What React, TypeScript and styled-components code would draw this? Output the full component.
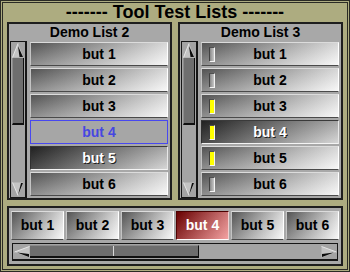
import React from "react";
import styled, { createGlobalStyle, css } from "styled-components";

const GlobalStyle = createGlobalStyle`
  body {
    margin: 0;
    font-family: "Liberation Sans", Arial, sans-serif;
  }
`;

const Frame = styled.div`
  box-sizing: border-box;
  width: 350px;
  height: 272px;
  background: #adac80;
  border: 3px double #2a2a24;
  padding: 0 4px 3px 4px;
  display: flex;
  flex-direction: column;
`;

const Title = styled.h1`
  margin: 0;
  height: 19px;
  line-height: 19px;
  font-size: 18px;
  font-weight: bold;
  text-align: center;
  color: #000;
  white-space: pre;
`;

const Lists = styled.div`
  display: grid;
  grid-template-columns: 1fr 1fr;
  gap: 6px;
  height: 178px;
`;

const Panel = styled.section`
  box-sizing: border-box;
  background: #a8a8a8;
  border: 2px solid #1e1e1e;
  display: flex;
  flex-direction: column;
`;

const PanelTitle = styled.div`
  height: 17px;
  line-height: 17px;
  font-size: 14px;
  font-weight: bold;
  text-align: center;
  color: #000;
`;

const ListBody = styled.div`
  display: flex;
  gap: 3px;
  padding: 0 2px 0 1px;
  height: 157px;
`;

const VScroll = styled.div`
  box-sizing: border-box;
  width: 17px;
  height: 157px;
  border: 1px solid #161616;
  border-right-width: 2px;
  background: #a4a4a4;
  display: flex;
  flex-direction: column;
  align-items: center;
`;

const ArrowBox = styled.div`
  width: 14px;
  height: 16px;
  display: flex;
  align-items: center;
  justify-content: center;
  flex: none;
`;

const VTrack = styled.div`
  flex: 1;
  width: 100%;
  padding: 0 1px;
  box-sizing: border-box;
`;

const VThumb = styled.div`
  box-sizing: border-box;
  height: 67px;
  background: #6e6e6e;
  border-left: 1px solid #8c8c8c;
  border-right: 1px solid #101010;
  border-bottom: 2px solid #101010;
`;

const Buttons = styled.div`
  flex: 1;
  display: flex;
  flex-direction: column;
  gap: 2px;
  margin-top: 1px;
`;

type Look = "normal" | "pressed" | "selected" | "red";

const looks = {
  normal: css`
    background: linear-gradient(to bottom, rgba(0, 0, 0, 0.12), rgba(255, 255, 255, 0.3)),
      linear-gradient(to right, #5e5e5e, #f4f4f4);
    border-color: #dcdcdc #ffffff #4a4a4a #c4c4c4;
    color: #000;
  `,
  pressed: css`
    background: linear-gradient(to bottom, rgba(0, 0, 0, 0.2), rgba(255, 255, 255, 0.15)),
      linear-gradient(to right, #2a2a2a, #cfcfcf);
    border-color: #3a3a3a #e8e8e8 #f4f4f4 #303030;
    color: #fff;
    text-shadow: 1px 1px 0 #202020;
  `,
  selected: css`
    background: #a6a6a6;
    border-color: #4848f0;
    color: #4646e0;
  `,
  red: css`
    background: linear-gradient(to bottom, rgba(0, 0, 0, 0.15), rgba(255, 255, 255, 0.2)),
      linear-gradient(to right, #7a0000, #f08a8a);
    border-color: #4a0000 #f0d0d0 #ffffff #500000;
    color: #fff;
  `,
};

const ListButton = styled.div<{ $look: Look }>`
  position: relative;
  box-sizing: border-box;
  height: 24px;
  border: 1px solid;
  font-size: 14px;
  font-weight: bold;
  line-height: 22px;
  text-align: center;
  ${(p) => looks[p.$look]}
`;

const Lamp = styled.span<{ $on: boolean }>`
  position: absolute;
  left: 7px;
  top: 4px;
  box-sizing: border-box;
  width: 6px;
  height: 15px;
  border-left: 1px solid #404040;
  border-top: 1px solid #505050;
  border-right: 1px solid #f4f4f4;
  border-bottom: 1px solid #f4f4f4;
  background: ${(p) => (p.$on ? "#ffff00" : "linear-gradient(to right, #8a8a8a, #c8c8c8)")};
`;

const Bottom = styled(Panel)`
  margin-top: 6px;
  height: 60px;
  padding: 3px 2px 2px 2px;
  gap: 3px;
`;

const Row = styled.div`
  display: grid;
  grid-template-columns: repeat(6, 1fr);
  gap: 2px;
`;

const RowButton = styled(ListButton)`
  height: 29px;
  line-height: 27px;
`;

const HScroll = styled.div`
  box-sizing: border-box;
  height: 18px;
  margin: 0 1px 0 1px;
  border: 1px solid #161616;
  border-bottom-width: 2px;
  background: #a4a4a4;
  display: flex;
  align-items: center;
`;

const HArrow = styled.div`
  width: 17px;
  height: 15px;
  display: flex;
  align-items: center;
  justify-content: center;
  flex: none;
`;

const HTrack = styled.div`
  flex: 1;
  height: 100%;
  padding: 1px 0;
  box-sizing: border-box;
  display: flex;
`;

const HThumb = styled.div`
  position: relative;
  box-sizing: border-box;
  width: 169px;
  height: 100%;
  background: #6e6e6e;
  border-top: 1px solid #8c8c8c;
  border-bottom: 2px solid #101010;
  border-right: 1px solid #101010;
`;

const Notch = styled.span`
  position: absolute;
  left: 83px;
  top: 0;
  bottom: 0;
  width: 1px;
  background: #d8d8d8;
`;

const UpArrow = () => (
  <svg width="12" height="15" viewBox="0 0 12 15">
    <polygon points="6,0 0.5,14.5 11.5,14.5" fill="#c4c4c4" />
    <polygon points="6,3 7.5,14 11,14" fill="#0c0c0c" />
    <polyline points="0.5,14.5 6,0.5" stroke="#e6e6e6" fill="none" />
  </svg>
);

const DownArrow = () => (
  <svg width="12" height="14" viewBox="0 0 12 14">
    <polygon points="0.5,0.5 11.5,0.5 6,13.5" fill="#c4c4c4" />
    <polygon points="9,1 11,1 6,13" fill="#0c0c0c" />
    <polyline points="0.5,0.5 6,13.5" stroke="#e6e6e6" fill="none" />
  </svg>
);

const LeftArrow = () => (
  <svg width="16" height="12" viewBox="0 0 16 12">
    <polygon points="0.5,6 15.5,0.5 15.5,11.5" fill="#c4c4c4" />
    <polygon points="3,6.5 15,8 15,11" fill="#0c0c0c" />
    <polyline points="0.5,6 15.5,0.5" stroke="#e6e6e6" fill="none" />
  </svg>
);

const RightArrow = () => (
  <svg width="16" height="12" viewBox="0 0 16 12">
    <polygon points="15.5,6 0.5,0.5 0.5,11.5" fill="#c4c4c4" />
    <polygon points="13,6.5 1,8 1,11" fill="#0c0c0c" />
    <polyline points="15.5,6 0.5,0.5" stroke="#e6e6e6" fill="none" />
  </svg>
);

const labels = ["but 1", "but 2", "but 3", "but 4", "but 5", "but 6"];

const list2: Look[] = ["normal", "normal", "normal", "selected", "pressed", "normal"];
const list3: Look[] = ["normal", "normal", "normal", "pressed", "normal", "normal"];
const lamps = [false, false, true, true, true, false];
const row: Look[] = ["normal", "normal", "normal", "red", "normal", "normal"];

function ScrollV() {
  return (
    <VScroll>
      <ArrowBox>
        <UpArrow />
      </ArrowBox>
      <VTrack>
        <VThumb />
      </VTrack>
      <ArrowBox>
        <DownArrow />
      </ArrowBox>
    </VScroll>
  );
}

export default function App() {
  return (
    <>
      <GlobalStyle />
      <Frame>
        <Title>------- Tool Test Lists -------</Title>
        <Lists>
          <Panel>
            <PanelTitle>Demo List 2</PanelTitle>
            <ListBody>
              <ScrollV />
              <Buttons>
                {labels.map((l, i) => (
                  <ListButton key={l} $look={list2[i]}>
                    {l}
                  </ListButton>
                ))}
              </Buttons>
            </ListBody>
          </Panel>
          <Panel>
            <PanelTitle>Demo List 3</PanelTitle>
            <ListBody>
              <ScrollV />
              <Buttons>
                {labels.map((l, i) => (
                  <ListButton key={l} $look={list3[i]}>
                    <Lamp $on={lamps[i]} />
                    {l}
                  </ListButton>
                ))}
              </Buttons>
            </ListBody>
          </Panel>
        </Lists>
        <Bottom>
          <Row>
            {labels.map((l, i) => (
              <RowButton key={l} $look={row[i]}>
                {l}
              </RowButton>
            ))}
          </Row>
          <HScroll>
            <HArrow>
              <LeftArrow />
            </HArrow>
            <HTrack>
              <HThumb>
                <Notch />
              </HThumb>
            </HTrack>
            <HArrow>
              <RightArrow />
            </HArrow>
          </HScroll>
        </Bottom>
      </Frame>
    </>
  );
}
